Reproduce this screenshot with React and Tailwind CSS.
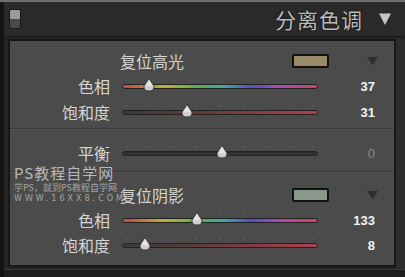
import React from "react";

const CJK = { fontFamily: '"Noto Sans CJK SC", "Noto Sans", sans-serif' };

function Thumb({ x }) {
  return (
    <svg
      width="12"
      height="14"
      viewBox="0 0 12 14"
      className="absolute top-[-7px]"
      style={{ left: x - 6 }}
    >
      <path d="M6 0.5 L11 8 Q11.5 13 6 13 Q0.5 13 1 8 Z" fill="#cfcfcf" stroke="#2a2a2a" strokeWidth="0.8" />
      <path d="M6 2 L9.5 8 L2.5 8 Z" fill="#e6e6e6" />
    </svg>
  );
}

function Track({ kind, pos }) {
  const bg =
    kind === "hue"
      ? "bg-[linear-gradient(to_right,#c04848_0%,#c0b040_22%,#58b048_38%,#40a8a8_52%,#5050c0_66%,#b048b8_80%,#c84860_100%)]"
      : kind === "sat"
      ? "bg-[linear-gradient(to_right,#3a3a3a_0%,#5a3a3a_35%,#b04050_100%)]"
      : "bg-[linear-gradient(to_bottom,#2a2a2a,#3a3a3a)]";
  const ticks = [0, 1, 2, 3, 4, 5, 6, 7, 8];
  return (
    <div className="relative w-[196px] h-[14px] flex items-center">
      <div className="absolute left-[4px] right-[4px] top-[0px] flex justify-between">
        {ticks.map((t) => (
          <div key={t} className="w-px h-[2px] bg-[#626262]" />
        ))}
      </div>
      <div className={`relative w-full h-[5px] rounded-full border border-[#222] ${bg}`}>
        <Thumb x={pos} />
      </div>
    </div>
  );
}

function SliderRow({ label, kind, pos, value, dim, h = "h-[26px]" }) {
  return (
    <div className={`flex items-center ${h}`}>
      <div className="w-[100px] text-right text-[16px] leading-none text-[#d4d4d4]" style={CJK}>
        {label}
      </div>
      <div className="ml-[12px]">
        <Track kind={kind} pos={pos} />
      </div>
      <div
        className={`w-[57px] text-right text-[13px] font-bold leading-none ${dim ? "text-[#8a8a8a] font-normal" : "text-[#f2f2f2]"}`}
        style={{ fontFamily: '"Liberation Sans", Arial, sans-serif' }}
      >
        {value}
      </div>
    </div>
  );
}

function HeaderRow({ label, color }) {
  return (
    <div className="flex items-center h-[24px]">
      <div className="w-[110px]" />
      <div className="text-[16px] leading-none text-[#d4d4d4]" style={CJK}>
        {label}
      </div>
      <div className="ml-auto w-[37px] h-[14px] border-2 border-[#111] rounded-[2px]" style={{ background: color }} />
      <div className="ml-[38px] flex">
        <svg width="11" height="8" viewBox="0 0 11 8">
          <path d="M0 0 L11 0 L5.5 8 Z" fill="#2e2e2e" />
        </svg>
      </div>
      <div className="w-[16px]" />
    </div>
  );
}

function Divider() {
  return (
    <div className="flex flex-col">
      <div className="h-px bg-[#383838]" />
      <div className="h-px bg-[#555555]" />
    </div>
  );
}

export default function App() {
  return (
    <div className="relative w-[405px] h-[277px] overflow-hidden bg-[#242424] flex flex-col">
      <div className="h-[2px] bg-[#6e6e6e]" />
      <div className="flex flex-1">
        <div className="w-[4px] bg-[#141414]" />
        <div className="flex-1 flex flex-col">
          {/* header */}
          <div className="h-[35px] flex items-center bg-[#2a2a2a] border-b border-[#1a1a1a]">
            <div className="ml-[5px] w-[12px] h-[20px] border border-[#151515] rounded-[2px] flex flex-col overflow-hidden">
              <div className="h-[9px] bg-[#9a9a9a]" />
              <div className="flex-1 bg-[#4a4a4a]" />
            </div>
            <div
              className="ml-auto text-[21px] leading-none text-[#bcbcbc] tracking-[1px] [text-shadow:0_0_2px_#000]"
              style={CJK}
            >
              分离色调
            </div>
            <svg width="12" height="12" viewBox="0 0 12 12" className="ml-[16px] mr-[14px]">
              <path d="M0 0.5 L12 0.5 L6 12 Z" fill="#c4c4c4" />
            </svg>
          </div>
          <div className="flex-1 flex pt-[2px]">
            <div className="w-[4px]" />
            <div className="w-[388px] h-[228px] border-2 border-[#181818] bg-[#4b4b4b] flex flex-col">
              <div className="pt-[8px] pb-[3px] flex flex-col">
                <HeaderRow label="复位高光" color="#9a8a68" />
                <SliderRow label="色相" kind="hue" pos={26} value="37" />
                <SliderRow label="饱和度" kind="sat" pos={64} value="31" />
              </div>
              <Divider />
              <div className="pt-[10px] pb-[5px]">
                <SliderRow label="平衡" kind="bal" pos={99} value="0" dim />
              </div>
              <Divider />
              <div className="pt-[10px] flex flex-col">
                <HeaderRow label="复位阴影" color="#88988a" />
                <SliderRow label="色相" kind="hue" pos={74} value="133" />
                <SliderRow label="饱和度" kind="sat" pos={22} value="8" h="h-[24px]" />
              </div>
            </div>
            <div className="flex-1 bg-[#2c2c2c]" />
          </div>
          <div className="h-[8px] bg-[#1e1e1e] border-t border-[#3a3a3a]" />
        </div>
      </div>
      {/* watermark overlay */}
      <div className="absolute left-[14px] top-[165px] flex flex-col pointer-events-none">
        <div className="text-[15px] leading-none text-[#d8d8d8]/80 tracking-[1px]" style={CJK}>
          PS教程自学网
        </div>
        <div className="mt-[3px] text-[9px] leading-none text-[#d0d0d0]/70" style={CJK}>
          学PS，就到PS教程自学网
        </div>
        <div className="mt-[3px] text-[8px] leading-none text-[#d0d0d0]/70 tracking-[3px]" style={{ fontFamily: '"DejaVu Sans", sans-serif' }}>
          WWW.16XX8.COM
        </div>
      </div>
    </div>
  );
}
